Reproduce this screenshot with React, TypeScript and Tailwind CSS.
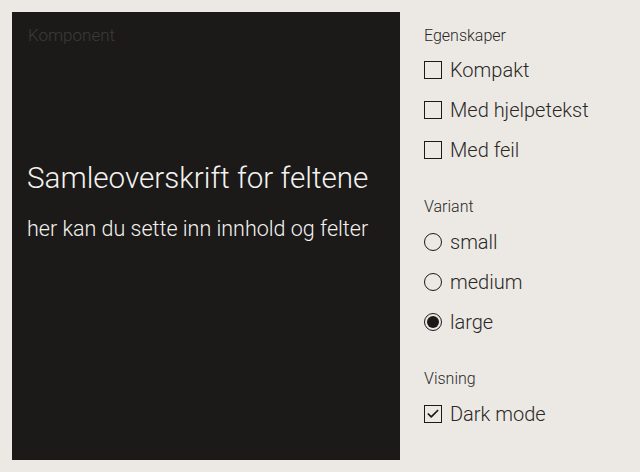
import { Check } from "lucide-react";

const font = { fontFamily: "Roboto, 'Noto Sans', sans-serif" };

function CheckRow({ label, checked }: { label: string; checked?: boolean }) {
  return (
    <div className="flex items-center gap-2 h-10">
      <span className="w-[18px] h-[18px] border-[1.5px] border-[#1b1a19] flex items-center justify-center">
        {checked && <Check className="w-[14px] h-[14px] text-[#1b1a19]" strokeWidth={3} />}
      </span>
      <span className="text-[20px] font-light text-[#2a2826]">{label}</span>
    </div>
  );
}

function RadioRow({ label, checked }: { label: string; checked?: boolean }) {
  return (
    <div className="flex items-center gap-2 h-10">
      <span className="w-[18px] h-[18px] rounded-full border-[1.5px] border-[#1b1a19] flex items-center justify-center">
        {checked && <span className="w-[12px] h-[12px] rounded-full bg-[#1b1a19]" />}
      </span>
      <span className="text-[20px] font-light text-[#2a2826]">{label}</span>
    </div>
  );
}

export default function App() {
  return (
    <div className="w-[640px] h-[472px] bg-[#ece9e5] p-3 flex gap-6" style={font}>
      <div className="w-[388px] h-[448px] bg-[#1b1a19] flex flex-col">
        <div className="px-4 pt-[11px] text-[17px] font-light text-[#3d3b38]">Komponent</div>
        <div className="px-[15px] pt-[111px]">
          <h2 className="text-[29.6px] font-light text-[#f4f2ef] leading-9 whitespace-nowrap">Samleoverskrift for feltene</h2>
          <p className="mt-[17px] text-[21.5px] font-light text-[#f4f2ef] whitespace-nowrap">her kan du sette inn innhold og felter</p>
        </div>
      </div>
      <div className="flex flex-col pt-3">
        <div className="text-[16px] font-light text-[#2a2826] h-6">Egenskaper</div>
        <div className="mt-0.5">
          <CheckRow label="Kompakt" />
          <CheckRow label="Med hjelpetekst" />
          <CheckRow label="Med feil" />
        </div>
        <div className="text-[16px] font-light text-[#2a2826] h-6 mt-[25px]">Variant</div>
        <div className="mt-[3px]">
          <RadioRow label="small" />
          <RadioRow label="medium" />
          <RadioRow label="large" checked />
        </div>
        <div className="text-[16px] font-light text-[#2a2826] h-6 mt-[25px]">Visning</div>
        <div className="mt-[3px]">
          <CheckRow label="Dark mode" checked />
        </div>
      </div>
    </div>
  );
}
